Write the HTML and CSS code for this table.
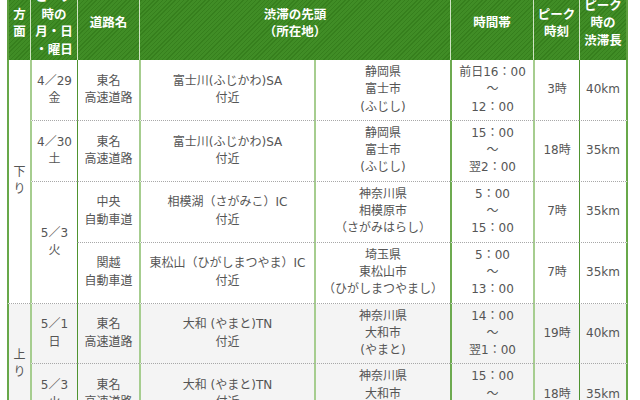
FILE: index.html
```html
<!DOCTYPE html>
<html lang="ja">
<head>
<meta charset="utf-8">
<link rel="stylesheet" href="styles.css">
</head>
<body>
<div class="page">
<table class="jam">
<colgroup>
<col class="c1"><col class="c2"><col class="c3"><col class="c4"><col class="c5"><col class="c6"><col class="c7"><col class="c8">
</colgroup>
<thead>
<tr>
<th class="b-first">方<br>面</th>
<th class="b-light">ピーク<br>時の<br>月・日<br>・曜日</th>
<th class="b-dark">道路名</th>
<th class="b-light" colspan="2">渋滞の先頭<br>（所在地）</th>
<th class="b-mid">時間帯</th>
<th class="b-light">ピーク<br>時刻</th>
<th class="b-dark b-last">ピーク<br>時の<br>渋滞長</th>
</tr>
</thead>
<tbody class="down">
<tr>
<td class="b-first dir" rowspan="4">下<br>り</td>
<td class="b-light">4／29<br>金</td>
<td class="b-dark">東名<br>高速道路</td>
<td class="b-light">富士川(ふじかわ)SA<br>付近</td>
<td class="b-light">静岡県<br>富士市<br>(ふじし)</td>
<td class="b-mid">前日16：00<br>～<br>12：00</td>
<td class="b-light">3時</td>
<td class="b-dark b-last">40km</td>
</tr>
<tr>
<td class="b-light">4／30<br>土</td>
<td class="b-dark">東名<br>高速道路</td>
<td class="b-light">富士川(ふじかわ)SA<br>付近</td>
<td class="b-light">静岡県<br>富士市<br>(ふじし)</td>
<td class="b-mid">15：00<br>～<br>翌2：00</td>
<td class="b-light">18時</td>
<td class="b-dark b-last">35km</td>
</tr>
<tr>
<td class="b-light" rowspan="2">5／3<br>火</td>
<td class="b-dark">中央<br>自動車道</td>
<td class="b-light">相模湖（さがみこ）IC<br>付近</td>
<td class="b-light">神奈川県<br>相模原市<br>（さがみはらし）</td>
<td class="b-mid">5：00<br>～<br>15：00</td>
<td class="b-light">7時</td>
<td class="b-dark b-last">35km</td>
</tr>
<tr>
<td class="b-dark">関越<br>自動車道</td>
<td class="b-light">東松山（ひがしまつやま）IC<br>付近</td>
<td class="b-light">埼玉県<br>東松山市<br>（ひがしまつやまし）</td>
<td class="b-mid">5：00<br>～<br>13：00</td>
<td class="b-light">7時</td>
<td class="b-dark b-last">35km</td>
</tr>
</tbody>
<tbody class="up">
<tr>
<td class="b-first dir" rowspan="2">上<br>り</td>
<td class="b-light">5／1<br>日</td>
<td class="b-dark">東名<br>高速道路</td>
<td class="b-light">大和 (やまと)TN<br>付近</td>
<td class="b-light">神奈川県<br>大和市<br>(やまと)</td>
<td class="b-mid">14：00<br>～<br>翌1：00</td>
<td class="b-light">19時</td>
<td class="b-dark b-last">40km</td>
</tr>
<tr>
<td class="b-light">5／3<br>火</td>
<td class="b-dark">東名<br>高速道路</td>
<td class="b-light">大和 (やまと)TN<br>付近</td>
<td class="b-light">神奈川県<br>大和市<br>(やまと)</td>
<td class="b-mid">15：00<br>～<br>翌2：00</td>
<td class="b-light">18時</td>
<td class="b-dark b-last">35km</td>
</tr>
</tbody>
</table>
</div>
</body>
</html>
```
FILE: styles.css
```css
html, body {
  margin: 0;
  padding: 0;
  background: #fff;
}
.page {
  width: 640px;
  height: 400px;
  overflow: hidden;
  padding-left: 7px;
  box-sizing: border-box;
}
.jam {
  margin-top: -16px;
  width: 621px;
  table-layout: fixed;
  border-collapse: separate;
  border-spacing: 0;
  font-family: "DejaVu Sans", "Noto Sans CJK JP", sans-serif;
  font-size: 12px;
  color: #555;
}
.c1 { width: 23px; }
.c2 { width: 47px; }
.c3 { width: 62px; }
.c4 { width: 175px; }
.c5 { width: 136px; }
.c6 { width: 83px; }
.c7 { width: 46px; }
.c8 { width: 49px; }

.jam th {
  background-color: #3a891f;
  background-image: repeating-linear-gradient(135deg, rgba(0,0,0,0.07) 0 1px, rgba(255,255,255,0.03) 1px 3px);
  color: #fff;
  font-family: "Noto Sans CJK JP", sans-serif;
  font-weight: bold;
  font-size: 12.5px;
  line-height: 17.5px;
  padding: 3px 0;
  text-align: center;
  vertical-align: middle;
  border-left: 1px solid #cfe3c2;
  white-space: nowrap;
}
.jam th.b-first { border-left: 2px solid #5d9e3e; }
.jam th.b-last { border-right: 2px solid #5d9e3e; }

.jam td {
  line-height: 17.3px;
  padding: 4px 0;
  text-align: center;
  vertical-align: middle;
  white-space: nowrap;
  border-bottom: 1px dotted #a8a8a8;
}
.jam td.b-first { border-left: 2px solid #68a84a; }
.jam td.b-light { border-left: 2px solid #a6cd8f; }
.jam td.b-dark { border-left: 1px solid #4f9330; }
.jam td.b-mid { border-left: 2px solid #6daa50; }
.jam td.b-last { border-right: 2px solid #68a84a; }

.up td {
  background: #f4f4f4;
}
```
